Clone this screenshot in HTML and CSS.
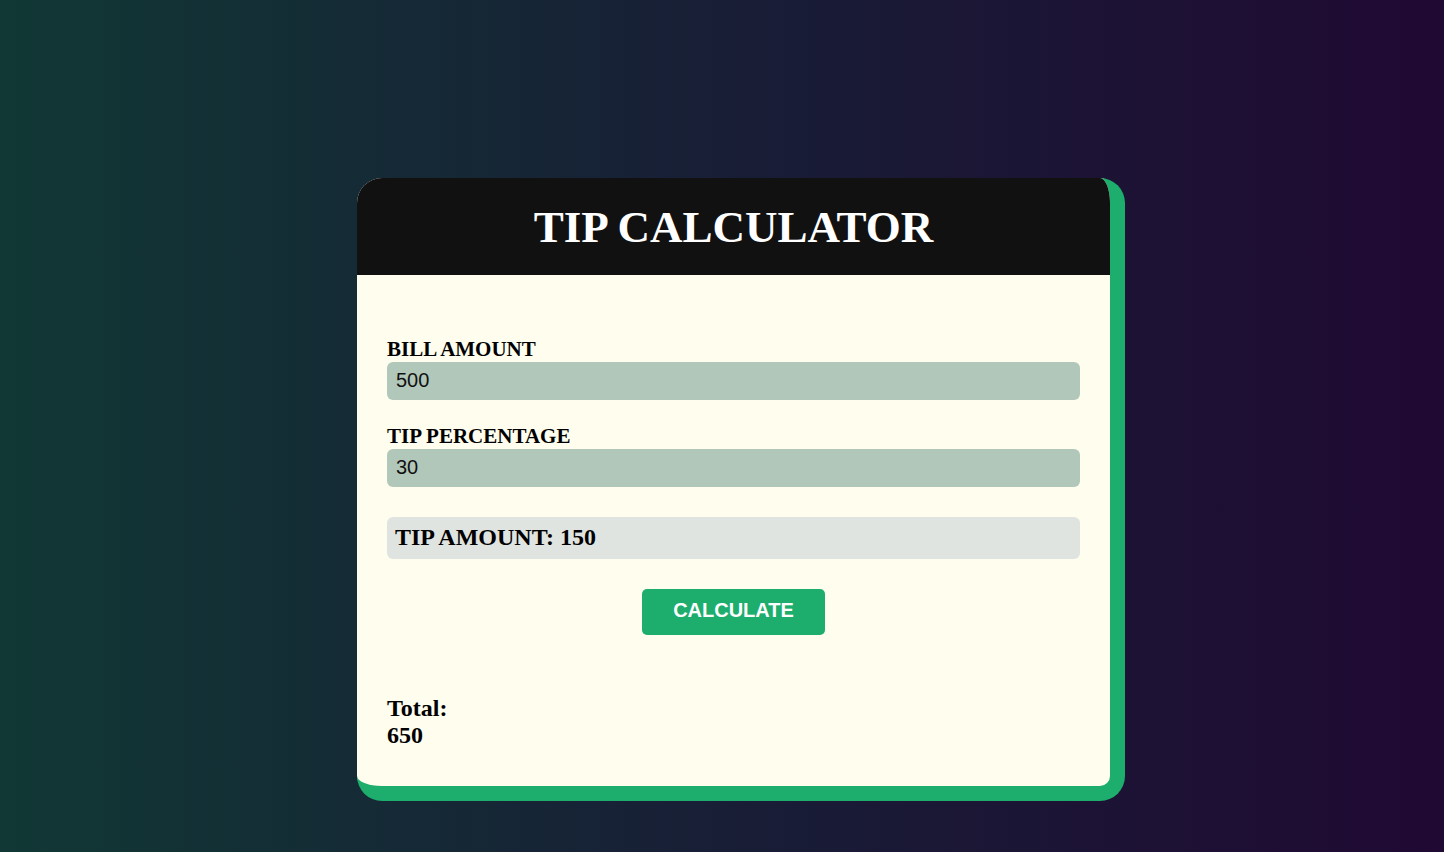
FILE: index.html
```html
<!DOCTYPE html>
<html lang="en">
<head>
<meta charset="utf-8">
<title>Tip Calculator</title>
<link rel="stylesheet" href="styles.css">
</head>
<body>
<div class="page">
  <div class="card">
    <header class="card-header">
      <h1 class="title">TIP CALCULATOR</h1>
    </header>
    <div class="card-body">
      <div class="field">
        <label class="label" for="bill">BILL AMOUNT</label>
        <input class="input" id="bill" type="text" value="500">
      </div>
      <div class="field">
        <label class="label" for="tip">TIP PERCENTAGE</label>
        <input class="input" id="tip" type="text" value="30">
      </div>
      <div class="tip-amount">TIP AMOUNT: 150</div>
      <div class="actions">
        <button class="btn" type="button">CALCULATE</button>
      </div>
      <div class="total">Total:<br>650</div>
    </div>
  </div>
</div>
</body>
</html>
```
FILE: styles.css
```css
* { box-sizing: border-box; }
html, body { height: 100%; }
body {
  margin: 0;
  background: linear-gradient(to right, #113835, #181e36 50%, #200933);
  font-family: "Liberation Serif", "Times New Roman", serif;
}
.page {
  display: flex;
  justify-content: center;
  padding: 178px 0 0 38px;
}
.card {
  width: 768px;
  background: #fffdee;
  border-right: 15px solid #1dad6d;
  border-bottom: 15px solid #1dad6d;
  border-radius: 25px;
  overflow: hidden;
}
.card-header {
  height: 97px;
  background: #111111;
  display: flex;
  align-items: center;
  justify-content: center;
}
.title {
  margin: 0;
  color: #ffffff;
  font-size: 45px;
  font-weight: bold;
}
.card-body {
  padding: 62px 30px 37px;
}
.field {
  display: flex;
  flex-direction: column;
  margin-bottom: 24px;
}
.label {
  font-size: 21px;
  font-weight: bold;
  color: #000;
  line-height: 25px;
}
.input {
  height: 38px;
  border: none;
  border-radius: 6px;
  background: #b1c7ba;
  padding: 0 9px 2px;
  font-family: "Liberation Sans", Arial, sans-serif;
  font-size: 20px;
  color: #111;
  outline: none;
}
.tip-amount {
  margin-top: 30px;
  height: 42px;
  display: flex;
  align-items: center;
  padding: 0 8px 2px;
  border-radius: 6px;
  background: #e0e4e0;
  font-size: 24px;
  font-weight: bold;
  color: #000;
}
.actions {
  display: flex;
  justify-content: center;
  margin-top: 30px;
}
.btn {
  width: 183px;
  height: 46px;
  border: none;
  border-radius: 5px;
  background: #1dad6d;
  color: #fff;
  font-family: "Liberation Sans", Arial, sans-serif;
  font-size: 20px;
  font-weight: bold;
  padding: 0 0 4px;
}
.total {
  margin-top: 60px;
  font-size: 24px;
  font-weight: bold;
  line-height: 27px;
  color: #000;
}
```
